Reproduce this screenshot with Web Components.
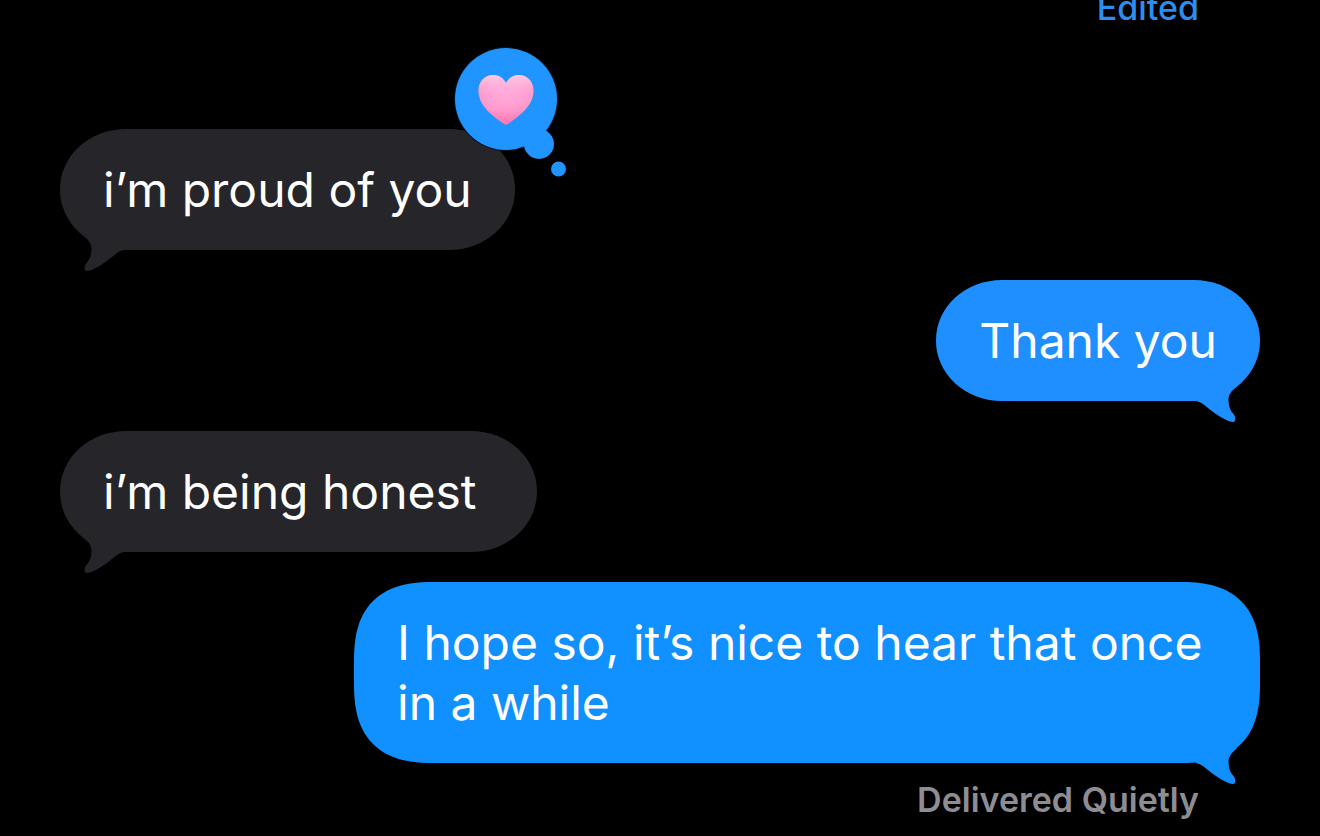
<!DOCTYPE html>
<html lang="en">
<head>
<meta charset="utf-8">
<meta name="viewport" content="width=device-width, initial-scale=1">
<title>Messages</title>
<style>
  html, body { margin: 0; background: #000; }
</style>
</head>
<body>
<message-thread>
  <message-status class="link"><a href="#history">Edited</a></message-status>
  <message-bubble from="them" class="first">i’m proud of you<heart-reaction slot="reaction"></heart-reaction></message-bubble>
  <message-bubble from="me">Thank you</message-bubble>
  <message-bubble from="them" class="roomy">i’m being honest</message-bubble>
  <message-bubble from="me" class="latest">I hope so, it’s nice to hear that once in a while</message-bubble>
  <message-status>Delivered Quietly</message-status>
</message-thread>

<template id="thread">
  <style>
    :host {
      box-sizing: border-box;
      display: flex;
      flex-direction: column;
      justify-content: flex-end;
      gap: 30px;
      height: 100vh;
      padding: 0 60px 16px;
      overflow: hidden;
      background: #000;
      color: #fff;
      font: 400 48px/60px Inter, "Liberation Sans", sans-serif;
    }
    ::slotted(*) { flex: none; }
    ::slotted(.first) { margin-top: 71px; }
    ::slotted(.roomy) { --end: 60px; }
    ::slotted(.latest) { --fill: #1190ff; --radius: 80px; --corner: superellipse(1.35); margin-bottom: -13px; }
    ::slotted(.link) { --status: #2c8ff0; --weight: 500; }
  </style>
  <slot></slot>
</template>

<template id="bubble">
  <style>
    :host {
      position: relative;
      box-sizing: border-box;
      align-self: flex-start;
      max-width: 75.5%;
      padding: 31px var(--end, 43px) 30px 43px;
      border-radius: 66px / 60px;
      background: var(--fill);
      --fill: #26252a;
    }
    :host([from="me"]) { align-self: flex-end; --fill: #1f8fff; }
    @supports (corner-shape: superellipse(1.5)) {
      :host {
        border-radius: var(--radius, 66px / 60px);
        corner-shape: var(--corner, round);
      }
    }
    .tail {
      position: absolute;
      left: 0;
      bottom: -22px;
      width: 72px;
      height: 62px;
      fill: var(--fill);
    }
    :host([from="me"]) .tail { left: auto; right: 0; transform: scaleX(-1); }
    .text { position: relative; }
  </style>
  <svg class="tail" viewBox="0 0 72 62" aria-hidden="true">
    <path d="M23 25C28 30 32 33 31.500 40C31 46 30 49 26.500 53C24 56 24 61 27 61C31 61 38 57 44 53C52 48 57 41 64 40L66 20Z"/>
  </svg>
  <div class="text"><slot></slot></div>
  <slot name="reaction"></slot>
</template>

<template id="reaction">
  <style>
    :host { position: absolute; top: -83px; right: -54px; width: 116px; height: 134px; }
    svg { display: block; width: 100%; height: 100%; }
  </style>
  <svg viewBox="0 0 116 134" role="img" aria-label="Heart reaction">
    <defs>
      <radialGradient id="pink" cx="50%" cy="42%" r="62%">
        <stop offset="0" stop-color="#ffa8da"/>
        <stop offset=".55" stop-color="#ff9ed2"/>
        <stop offset="1" stop-color="#fc8cc0"/>
      </radialGradient>
      <linearGradient id="shine" x1="0" y1="0" x2="0" y2="1">
        <stop offset="0" stop-color="#ffd6ea" stop-opacity=".8"/>
        <stop offset=".45" stop-color="#ffb0da" stop-opacity=".1"/>
        <stop offset="1" stop-color="#ff5ca0" stop-opacity=".6"/>
      </linearGradient>
      <path id="heart" d="M53 37C50 31.500 45.500 29 40 29C31.500 29 25.500 36 25.500 44.500C25.500 60 39 69 50.500 77.500Q53 79.500 55.500 77.500C67 69 80.500 60 80.500 44.500C80.500 36 74.500 29 66 29C60.500 29 56 31.500 53 37Z"/>
    </defs>
    <circle cx="53" cy="53" r="52" fill="#0c1420"/>
    <g fill="#2094ff">
      <circle cx="53" cy="53" r="51"/>
      <circle cx="86" cy="98" r="15"/>
      <circle cx="105.500" cy="123" r="7.500"/>
    </g>
    <use href="#heart" fill="url(#pink)"/>
    <use href="#heart" fill="url(#shine)"/>
  </svg>
</template>

<template id="status">
  <style>
    :host {
      align-self: flex-end;
      padding-right: 61px;
      color: var(--status, #8e8d93);
      font-size: 34px;
      line-height: 40px;
      font-weight: var(--weight, 600);
    }
    ::slotted(a) { color: inherit; text-decoration: none; }
  </style>
  <slot></slot>
</template>

<script>
  class TemplateElement extends HTMLElement {
    constructor() {
      super();
      const source = document.getElementById(this.constructor.template);
      this.attachShadow({ mode: "open" }).append(source.content.cloneNode(true));
    }
  }
  customElements.define("message-thread", class extends TemplateElement { static template = "thread"; });
  customElements.define("message-bubble", class extends TemplateElement { static template = "bubble"; });
  customElements.define("heart-reaction", class extends TemplateElement { static template = "reaction"; });
  customElements.define("message-status", class extends TemplateElement { static template = "status"; });
</script>
</body>
</html>
